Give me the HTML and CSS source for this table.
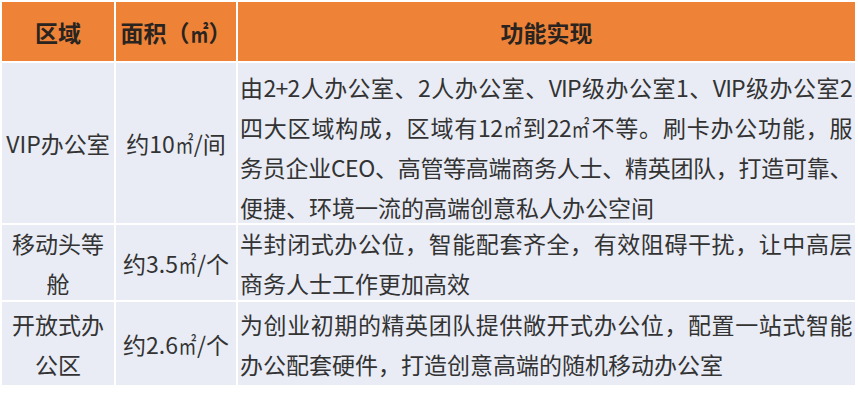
FILE: index.html
```html
<!DOCTYPE html>
<html lang="zh-CN">
<head>
<meta charset="utf-8">
<title>区域功能表</title>
<link rel="stylesheet" href="styles.css">
</head>
<body>
<div class="table">
  <div class="cell head">区域</div>
  <div class="cell head">面积（<span class="sqm">㎡</span>）</div>
  <div class="cell head">功能实现</div>

  <div class="cell name r1">VIP办公室</div>
  <div class="cell area r1">约10<span class="sqm">㎡</span>/间</div>
  <div class="cell desc r1">
    <span class="ln l1">由2+2人办公室、2人办公室、VIP级办公室1、VIP级办公室2</span>
    <span class="ln">四大区域构成，区域有12<span class="sqm">㎡</span>到22<span class="sqm">㎡</span>不等。刷卡办公功能，服</span>
    <span class="ln">务员企业CEO、高管等高端商务人士、精英团队，打造可靠、</span>
    <span class="ln last">便捷、环境一流的高端创意私人办公空间</span>
  </div>

  <div class="cell name">移动头等舱</div>
  <div class="cell area">约3.5<span class="sqm">㎡</span>/个</div>
  <div class="cell desc">
    <span class="ln">半封闭式办公位，智能配套齐全，有效阻碍干扰，让中高层</span>
    <span class="ln last">商务人士工作更加高效</span>
  </div>

  <div class="cell name">开放式办公区</div>
  <div class="cell area">约2.6<span class="sqm">㎡</span>/个</div>
  <div class="cell desc">
    <span class="ln">为创业初期的精英团队提供敞开式办公位，配置一站式智能</span>
    <span class="ln last">办公配套硬件，打造创意高端的随机移动办公室</span>
  </div>
</div>
</body>
</html>
```
FILE: styles.css
```css
html, body {
  margin: 0;
  padding: 0;
  background: #ffffff;
}

body {
  font-family: "Noto Sans CJK SC", "Noto Sans", sans-serif;
  font-size: 23px;
  color: #333333;
}

.table {
  display: grid;
  grid-template-columns: 112px 120px 617px;
  grid-template-rows: 59px 160px 75px 83px;
  gap: 2px;
  margin: 2px 0 0 2px;
  width: 853px;
}

.cell {
  background: #e9ecf5;
  display: flex;
  align-items: center;
  justify-content: center;
  text-align: center;
  line-height: 40px;
  min-height: 0;
  min-width: 0;
}

.head {
  background: #ee8338;
  color: #2a2420;
  font-weight: bold;
  font-size: 23px;
}

.name {
  padding: 0 4px;
}

.area {
  padding: 0 2px;
}

.desc {
  flex-direction: column;
  align-items: stretch;
  justify-content: flex-start;
  text-align: left;
  padding: 0 3px 0 2px;
}

.r1.desc {
  padding-top: 4px;
  line-height: 40px;
}

.desc:not(.r1) {
  justify-content: center;
}

.ln {
  display: block;
  text-align: justify;
  text-align-last: justify;
  white-space: nowrap;
  letter-spacing: -0.5px;
}

.ln.last {
  text-align-last: left;
  letter-spacing: 0;
}

.l1 {
  letter-spacing: -0.8px;
}

.sqm {
  display: inline-block;
  transform: scaleX(0.78);
  margin: 0 -2px;
  letter-spacing: 0;
}
```
